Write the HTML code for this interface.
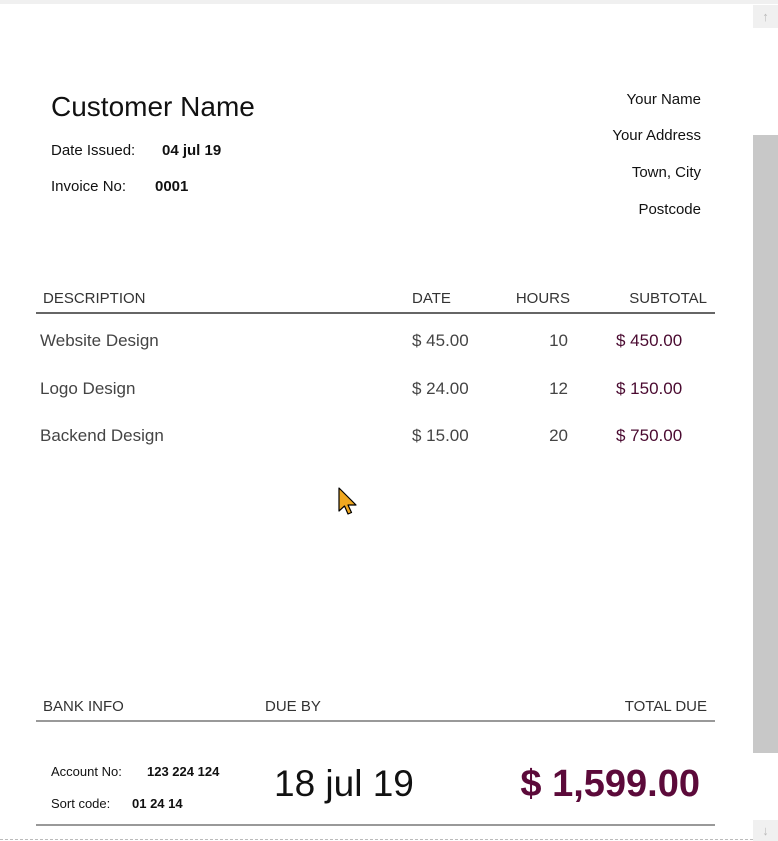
<!DOCTYPE html>
<html><head><meta charset="utf-8"><style>
html,body{margin:0;padding:0;width:778px;height:841px;overflow:hidden;background:#fff;font-family:"Liberation Sans",sans-serif;}
.a{position:absolute;white-space:nowrap;line-height:1;}
.r{text-align:right;}
.h{font-size:15px;color:#333;}
.row{font-size:17px;color:#444;}
.sub{color:#4a0a30;}
.line{position:absolute;height:2px;}
</style></head><body>
<div style="position:absolute;left:0;top:0;width:778px;height:4px;background:#f0f0f0"></div>
<div style="position:absolute;left:753px;top:4px;width:25px;height:837px;background:#fff"></div>
<div style="position:absolute;left:753px;top:5px;width:25px;height:23px;background:#f0f0f0;color:#bbb;font-size:13px;text-align:center;line-height:23px">↑</div>
<div style="position:absolute;left:753px;top:135px;width:25px;height:618px;background:#c8c8c8"></div>
<div style="position:absolute;left:753px;top:820px;width:25px;height:21px;background:#f0f0f0;color:#bbb;font-size:13px;text-align:center;line-height:21px">↓</div>
<div style="position:absolute;left:0;top:839px;width:753px;border-top:1px dashed #bbb"></div>

<div class="a" style="left:51px;top:93px;font-size:28px;color:#111">Customer Name</div>
<div class="a" style="left:51px;top:143px;font-size:15px;color:#111">Date Issued:</div>
<div class="a" style="left:162px;top:143px;font-size:15px;font-weight:bold;color:#111">04 jul 19</div>
<div class="a" style="left:51px;top:179px;font-size:15px;color:#111">Invoice No:</div>
<div class="a" style="left:155px;top:179px;font-size:15px;font-weight:bold;color:#111">0001</div>

<div class="a r" style="right:77px;top:92px;font-size:15px;color:#111">Your Name</div>
<div class="a r" style="right:77px;top:128px;font-size:15px;color:#111">Your Address</div>
<div class="a r" style="right:77px;top:165px;font-size:15px;color:#111">Town, City</div>
<div class="a r" style="right:77px;top:202px;font-size:15px;color:#111">Postcode</div>

<div class="a h" style="left:43px;top:291px">DESCRIPTION</div>
<div class="a h" style="left:412px;top:291px">DATE</div>
<div class="a h r" style="right:208px;top:291px">HOURS</div>
<div class="a h r" style="right:71px;top:291px">SUBTOTAL</div>
<div class="line" style="left:36px;top:312px;width:679px;background:#666"></div>

<div class="a row" style="left:40px;top:332px">Website Design</div>
<div class="a row" style="left:412px;top:332px">$ 45.00</div>
<div class="a row r" style="right:210px;top:332px">10</div>
<div class="a row sub" style="left:616px;top:332px">$ 450.00</div>
<div class="a row" style="left:40px;top:380px">Logo Design</div>
<div class="a row" style="left:412px;top:380px">$ 24.00</div>
<div class="a row r" style="right:210px;top:380px">12</div>
<div class="a row sub" style="left:616px;top:380px">$ 150.00</div>
<div class="a row" style="left:40px;top:427px">Backend Design</div>
<div class="a row" style="left:412px;top:427px">$ 15.00</div>
<div class="a row r" style="right:210px;top:427px">20</div>
<div class="a row sub" style="left:616px;top:427px">$ 750.00</div>

<svg style="position:absolute;left:338px;top:487px" width="22" height="30" viewBox="0 0 22 30"><path d="M1 1 L1 24 L6.5 19 L10 27 L13.5 25.5 L10 18 L18 18 Z" fill="#f0a820" stroke="#000" stroke-width="1.2" stroke-linejoin="round"/></svg>

<div class="a h" style="left:43px;top:699px">BANK INFO</div>
<div class="a h" style="left:265px;top:699px">DUE BY</div>
<div class="a h r" style="right:71px;top:699px">TOTAL DUE</div>
<div class="line" style="left:36px;top:720px;width:679px;background:#999"></div>

<div class="a" style="left:51px;top:765px;font-size:13px;color:#111">Account No:</div>
<div class="a" style="left:147px;top:765px;font-size:13px;font-weight:bold;color:#111">123 224 124</div>
<div class="a" style="left:51px;top:797px;font-size:13px;color:#111">Sort code:</div>
<div class="a" style="left:132px;top:797px;font-size:13px;font-weight:bold;color:#111">01 24 14</div>
<div class="a" style="left:274px;top:765px;font-size:37px;color:#111">18 jul 19</div>
<div class="a r" style="right:78px;top:765px;font-size:38px;font-weight:bold;color:#5c0a3a">$ 1,599.00</div>
<div class="line" style="left:36px;top:824px;width:679px;background:#999"></div>
</body></html>
